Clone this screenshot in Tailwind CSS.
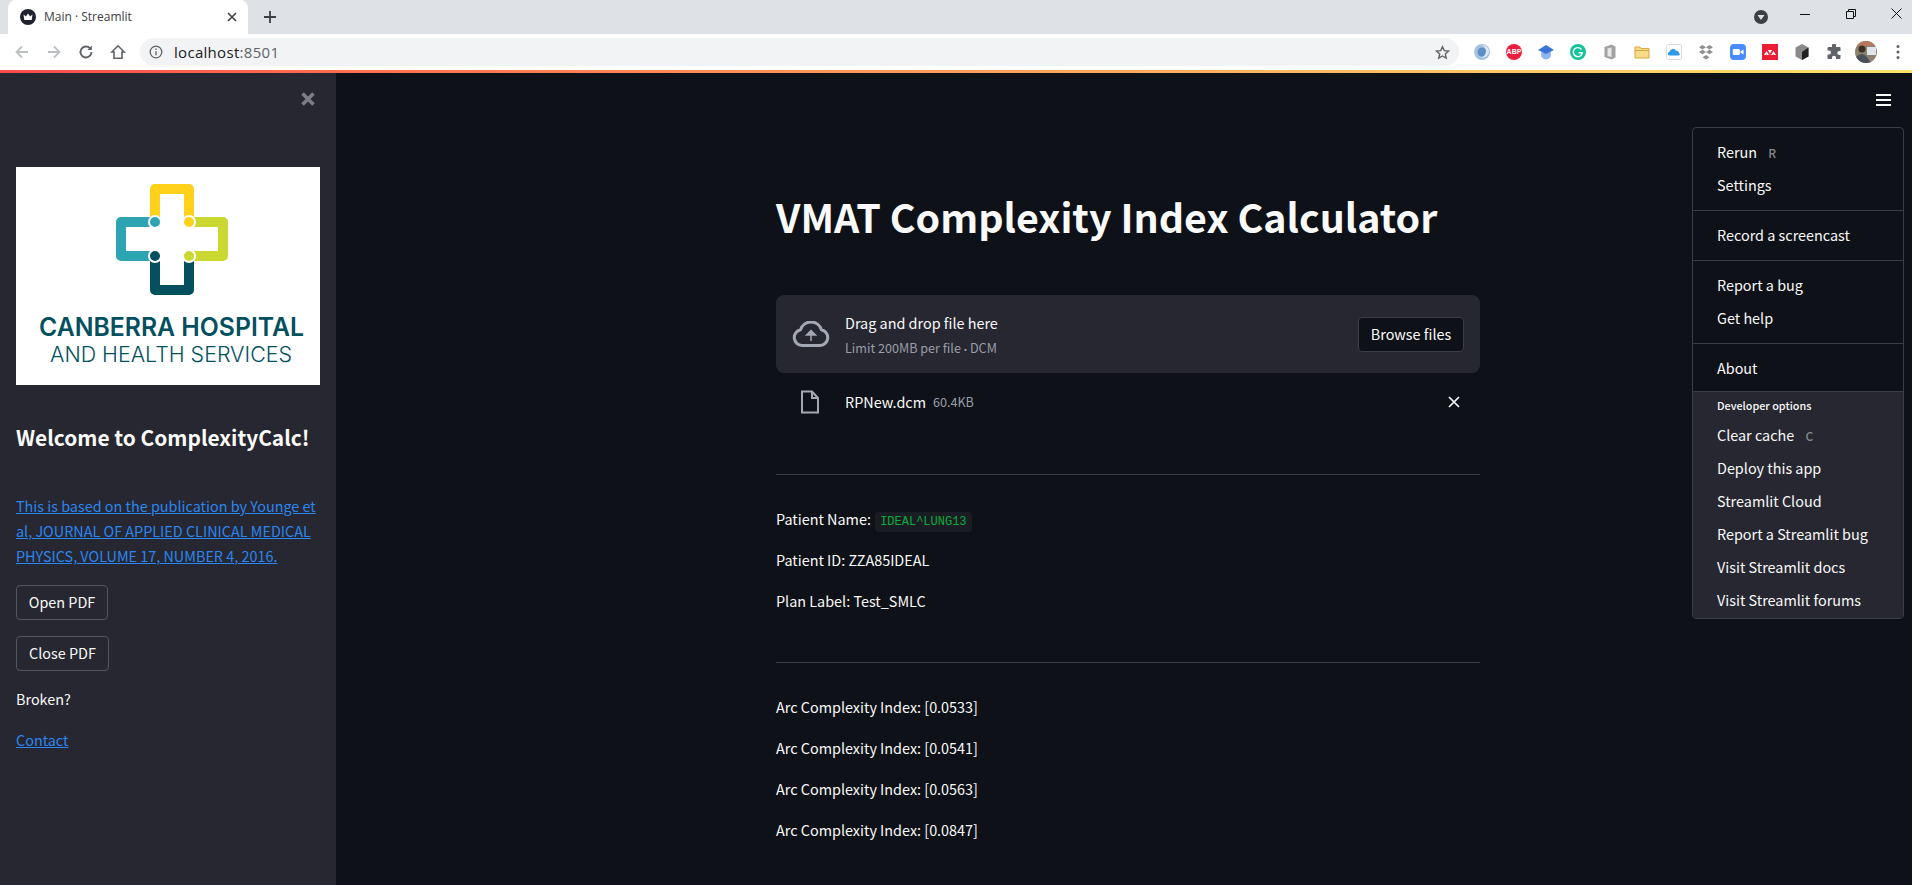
<!DOCTYPE html>
<html lang="en">
<head>
    <meta charset="UTF-8">
    <title>Main - Streamlit</title>
    <script src="https://cdn.jsdelivr.net/npm/@tailwindcss/browser@4"></script>
</head>
<body class="h-[885px] w-[1912px] overflow-hidden bg-[#0e1117] font-['Noto_Sans_CJK_SC','Noto_Sans',sans-serif] text-[#fafafa]">

    <!-- tab strip -->
    <div class="flex h-[34px] items-end bg-[#dee1e6] font-['Open_Sans',sans-serif]">
        <div class="ml-2 flex h-[34px] w-[240px] items-center rounded-t-lg bg-white pl-[12px] pr-[10px] text-[#3c4043]">
            <svg class="h-4 w-4" viewBox="0 0 16 16"><circle cx="8" cy="8" r="8" fill="#1f2330"/><path d="M3.500 5.500l2.400 2 2.100-3 2.100 3 2.400-2-.8 5.500H4.300z" fill="#fff"/></svg>
            <span class="ml-[8px] text-[12px]">Main · Streamlit</span>
            <svg class="ml-auto h-3 w-3" viewBox="0 0 12 12"><path d="M2 2l8 8M10 2l-8 8" stroke="#3c4043" stroke-width="1.600"/></svg>
        </div>
        <svg class="mb-[9px] ml-[14px] h-4 w-4" viewBox="0 0 16 16"><path d="M8 2v12M2 8h12" stroke="#3c4043" stroke-width="1.800"/></svg>
        <svg class="mb-[10px] ml-auto h-[14px] w-[14px]" viewBox="0 0 14 14"><circle cx="7" cy="7" r="7" fill="#3c4043"/><path d="M3.500 5h7L7 10z" fill="#dee1e6"/></svg>
        <div class="mb-[19px] ml-[32px] h-[1.500px] w-[10px] bg-[#111]"></div>
        <svg class="mb-[15px] ml-[36px] h-[10px] w-[10px]" viewBox="0 0 10 10" fill="none" stroke="#111" stroke-width="1"><path d="M.5 2.500h7v7h-7zM2.500 2.500v-2h7v7h-2"/></svg>
        <svg class="mb-[15px] ml-[35px] mr-[10px] h-[11px] w-[11px]" viewBox="0 0 11 11"><path d="M.5.500l10 10M10.500.500l-10 10" stroke="#111" stroke-width="1"/></svg>
    </div>

    <!-- toolbar -->
    <div class="flex h-[36px] items-center bg-white pl-[14px]">
        <svg class="h-4 w-4" viewBox="0 0 16 16" fill="none" stroke="#bcbfc3" stroke-width="1.800"><path d="M14 8H2.500M8 2.500L2.500 8 8 13.500"/></svg>
        <svg class="ml-[16px] h-4 w-4" viewBox="0 0 16 16" fill="none" stroke="#bcbfc3" stroke-width="1.800"><path d="M2 8h11.500M8 2.500L13.500 8 8 13.500"/></svg>
        <svg class="ml-[16px] h-4 w-4" viewBox="0 0 16 16" fill="none" stroke="#5f6368" stroke-width="1.900"><path d="M13.500 8a5.500 5.500 0 1 1-1.600-3.900"/><path d="M13.800 1.500v4.400H9.400z" fill="#5f6368" stroke="none"/></svg>
        <svg class="ml-[16px] h-4 w-4" viewBox="0 0 16 16" fill="none" stroke="#5f6368" stroke-width="1.600"><path d="M8 1.800L1.800 8H4v6.200h8V8h2.200z"/></svg>
        <div class="ml-[14px] flex h-[28px] w-[1319px] items-center rounded-full bg-[#f1f3f4] pl-[9px] pr-[9px]">
            <svg class="h-[14px] w-[14px]" viewBox="0 0 14 14" fill="none" stroke="#5f6368" stroke-width="1.300"><circle cx="7" cy="7" r="5.800"/><path d="M7 6.200v4M7 3.500v1.400"/></svg>
            <span class="ml-[11px] font-['Open_Sans',sans-serif] text-[15px] leading-[24px] tracking-[0.3px] text-[#202124]">localhost<span class="text-[#5f6368]">:8501</span></span>
            <svg class="ml-auto h-[15px] w-[15px]" viewBox="0 0 16 16" fill="none" stroke="#5f6368" stroke-width="1.500"><path d="M8 1.800l1.900 4.200 4.500.5-3.400 3 1 4.500L8 11.700 4 14l1-4.500-3.400-3 4.500-.5z"/></svg>
        </div>
        <div class="ml-[15px] flex items-center gap-[16px]">
            <svg class="h-4 w-4" viewBox="0 0 16 16"><circle cx="8" cy="8" r="8" fill="#a8c3e0"/><circle cx="8" cy="8" r="4.500" fill="#5e8fc4"/><path d="M8 1a7 7 0 0 1 4 6c0 3-2 5-4 7 5-1 7-4 7-7s-3-6-7-6z" fill="#dce8f3"/></svg>
            <div class="flex h-4 w-4 items-center justify-center rounded-full bg-[#ec1c3f] font-['Liberation_Sans',sans-serif] text-[7px] font-bold text-white">ABP</div>
            <svg class="h-4 w-4" viewBox="0 0 16 16"><circle cx="8" cy="10.500" r="5" fill="#8eb4f2"/><path d="M0 6l8-5 8 5-8 4z" fill="#3b74d8"/></svg>
            <svg class="h-4 w-4" viewBox="0 0 16 16"><circle cx="8" cy="8" r="8" fill="#15c39a"/><path d="M11.500 5.500a4.500 4.500 0 1 0 .8 3.200H8.500" fill="none" stroke="#fff" stroke-width="1.400"/></svg>
            <svg class="h-4 w-4" viewBox="0 0 16 16"><path d="M2.500 3L9.500.500 13.500 2.500v11l-4 2-7-2.500z" fill="#a2a2a2"/><path d="M5.500 4.500l4-1v9.500l-4-1z" fill="#e8e8e8"/></svg>
            <svg class="h-4 w-4" viewBox="0 0 16 16"><path d="M1 3h5l1 1.500h8V14H1z" fill="#f7dc87" stroke="#dba543" stroke-width="1"/><path d="M1 6.500h14" stroke="#dba543"/></svg>
            <svg class="h-4 w-4" viewBox="0 0 16 16"><rect x=".5" y=".5" width="15" height="15" rx="2" fill="#fff" stroke="#d8dadd"/><path d="M3 11.500a2 2 0 0 1 .5-3.800 3.500 3.500 0 0 1 6.500-1 2.500 2.500 0 0 1 3 2.500 1.200 1.200 0 0 1 0 2.300z" fill="#2f9ae8"/></svg>
            <svg class="h-4 w-4" viewBox="0 0 16 16" fill="#8f8f8f"><path d="M4.500 1L8 3.200 4.500 5.500 1 3.200zM11.500 1L15 3.200l-3.500 2.300L8 3.200zM4.500 5.800L8 8 4.500 10.300 1 8zM11.500 5.800L15 8l-3.500 2.300L8 8zM8 11l3.500 2.200L8 15.500l-3.500-2.300z"/></svg>
            <svg class="h-4 w-4" viewBox="0 0 16 16"><rect width="16" height="16" rx="4" fill="#4a8cff"/><rect x="2.800" y="5" width="7" height="6" rx="1.200" fill="#fff"/><path d="M10.500 7.500l3-2v5l-3-2z" fill="#fff"/></svg>
            <svg class="h-4 w-4" viewBox="0 0 16 16"><rect width="16" height="16" fill="#ec1c34"/><path d="M2 11l2.500-4L7 11l1-1.500L5.800 6h4.400L8 9.500 9 11l2.500-4L14 11h-2l-.5-1-.5 1H8.800L8 10l-.8 1H5l-.5-1-.5 1z" fill="#fff"/></svg>
            <svg class="h-4 w-4" viewBox="0 0 16 16"><path d="M8 0l6.500 3.500v9L8 16l-6.500-3.500v-9z" fill="#8a8a8a"/><path d="M8 8l6.500-4.500v9L8 16z" fill="#202020"/></svg>
            <svg class="h-4 w-4" viewBox="0 0 16 16" fill="#5f6368"><path d="M6 1.500a2 2 0 0 1 4 0V3h3.500a1 1 0 0 1 1 1v3h-1.200a2 2 0 0 0 0 4h1.200v3a1 1 0 0 1-1 1H10v-1.200a2 2 0 0 0-4 0V15H2.500a1 1 0 0 1-1-1v-3.500H3a2 2 0 0 0 0-4H1.500V4a1 1 0 0 1 1-1H6z"/></svg>
            <svg class="ml-[-3px] h-[22px] w-[22px] rounded-full" viewBox="0 0 22 22"><rect width="22" height="22" fill="#8d8270"/><rect y="0" width="22" height="5" fill="#b9775c"/><rect x="12" y="6" width="9" height="8" fill="#dfe5ea"/><circle cx="7" cy="8" r="3.500" fill="#3c3026"/><path d="M1 22v-6q6-6 11 0l4 6z" fill="#49515a"/></svg>
            <svg class="ml-[3px] h-4 w-[4px]" viewBox="0 0 4 16" fill="#5f6368"><circle cx="2" cy="2.500" r="1.500"/><circle cx="2" cy="8" r="1.500"/><circle cx="2" cy="13.500" r="1.500"/></svg>
        </div>
    </div>

    <!-- streamlit header line -->
    <div class="h-[3px] bg-gradient-to-r from-[#ff4b4b] to-[#ffe36b]"></div>

    <div class="relative flex h-[812px]">

        <!-- sidebar -->
        <aside class="flex w-[336px] shrink-0 flex-col bg-[#262730] px-4">
            <div class="flex h-[94px] shrink-0 justify-end pr-[4px] pt-[18px]">
                <svg class="h-[16px] w-[16px]" viewBox="0 0 16 16"><path d="M2.500 2.500l11 11M13.500 2.500l-11 11" stroke="#7d7e85" stroke-width="3.600"/></svg>
            </div>
            <div class="h-[218px] w-[304px] shrink-0 bg-white">
                <svg class="h-[218px] w-[304px]" viewBox="16 167 304 218">
                    <g fill="none" stroke-width="10" stroke-linejoin="round">
                        <path d="M155 222V189H189V222" stroke="#ffd11a"/>
                        <path d="M155 222H121V256H155" stroke="#2da4b2"/>
                        <path d="M189 222H223V256H189" stroke="#ccd832"/>
                        <path d="M155 256V290H189V256" stroke="#04505f"/>
                    </g>
                    <circle cx="155" cy="222" r="6" fill="#2da4b2" stroke="#fff" stroke-width="2"/>
                    <circle cx="189" cy="222" r="6" fill="#ffd11a" stroke="#fff" stroke-width="2"/>
                    <circle cx="155" cy="256" r="6" fill="#04505f" stroke="#fff" stroke-width="2"/>
                    <circle cx="189" cy="256" r="6" fill="#ccd832" stroke="#fff" stroke-width="2"/>
                    <text x="39" y="336" textLength="265" lengthAdjust="spacingAndGlyphs" font-family="Inter, sans-serif" font-size="25" font-weight="600" fill="#04505f">CANBERRA HOSPITAL</text>
                    <text x="50" y="362" textLength="242" lengthAdjust="spacingAndGlyphs" font-family="Inter, sans-serif" font-size="21" font-weight="300" fill="#04505f">AND HEALTH SERVICES</text>
                </svg>
            </div>
            <h2 class="mt-[35px] h-[34px] text-[20.9px] font-semibold leading-[34px]">Welcome to ComplexityCalc!</h2>
            <a class="mt-[39px] block text-[14.4px] leading-[25px] text-[#2b86f0] underline">This is based on the publication by Younge et al, JOURNAL OF APPLIED CLINICAL MEDICAL PHYSICS, VOLUME 17, NUMBER 4, 2016.</a>
            <button class="mt-[17px] h-[35px] w-[92px] rounded-[4px] border border-[#53545c] bg-[#262730] text-[14.4px] leading-none">Open PDF</button>
            <button class="mt-[16px] h-[35px] w-[93px] rounded-[4px] border border-[#53545c] bg-[#262730] text-[14.4px] leading-none">Close PDF</button>
            <p class="mt-[15px] h-[25px] text-[14.4px] leading-[25px]">Broken?</p>
            <a class="mt-[16px] block h-[25px] text-[14.4px] leading-[25px] text-[#2b86f0] underline">Contact</a>
        </aside>

        <!-- main column -->
        <main class="ml-[440px] w-[704px]">
            <h1 class="mt-[113px] h-[60px] text-[39.4px] font-bold leading-[60px]">VMAT Complexity Index Calculator</h1>
            <div class="mt-[49px] flex h-[78px] items-center rounded-lg bg-[#262730] pl-[16px] pr-[16px]">
                <svg class="h-[26px] w-[38px]" viewBox="0 0 38 26" fill="none" stroke="#a3a8b4" stroke-width="3"><path d="M10 24.500a8 8 0 0 1-1.500-15.800 11 11 0 0 1 21 0A8 8 0 0 1 28 24.500z"/><path d="M19 20v-6M14.500 14L19 9.500l4.500 4.500z" fill="#a3a8b4" stroke-width="1.500"/></svg>
                <div class="ml-[15px]">
                    <div class="h-[25px] text-[14.4px] leading-[23px]">Drag and drop file here</div>
                    <div class="mt-[2px] h-[20px] text-[12.6px] leading-[20px] text-[#9a9ea8]">Limit 200MB per file <span class="font-['Noto_Sans',sans-serif] text-[9px]">•</span> DCM</div>
                </div>
                <button class="ml-auto h-[35px] w-[106px] rounded-[4px] border border-[#3b3d45] bg-[#0e1117] text-[14.4px] leading-none">Browse files</button>
            </div>
            <div class="mt-[9px] flex h-[40px] items-center pl-[24px] pr-[19px]">
                <svg class="h-[24px] w-[20px]" viewBox="0 0 20 24" fill="none" stroke="#a3a8b4" stroke-width="2"><path d="M2 1.500h10l6 6.500v14.500H2z"/><path d="M12 1.500V8h6"/></svg>
                <span class="ml-[25px] mb-[2px] text-[14.4px] leading-[23px]">RPNew.dcm</span>
                <span class="ml-[7px] mb-[2px] text-[12.6px] leading-[23px] text-[#9a9ea8]">60.4KB</span>
                <svg class="ml-auto mb-[1px] h-[14px] w-[14px]" viewBox="0 0 14 14"><path d="M2 2l10 10M12 2L2 12" stroke="#fafafa" stroke-width="1.700"/></svg>
            </div>
            <hr class="mt-[52px] border-t border-[#3b3d45]">
            <div class="mt-[31px] flex flex-col gap-[16px] text-[14.4px] leading-[25px]">
                <p class="h-[25px]">Patient Name: <code class="ml-[1px] rounded bg-[#1a1c24] px-[5px] py-[3px] font-['Liberation_Mono',monospace] text-[12px] text-[#09ab3b]">IDEAL^LUNG13</code></p>
                <p class="h-[25px]">Patient ID: ZZA85IDEAL</p>
                <p class="h-[25px]">Plan Label: Test_SMLC</p>
            </div>
            <hr class="mt-[49px] border-t border-[#3b3d45]">
            <div class="mt-[31px] flex flex-col gap-[16px] text-[14.4px] leading-[25px]">
                <p class="h-[25px]">Arc Complexity Index: [0.0533]</p>
                <p class="h-[25px]">Arc Complexity Index: [0.0541]</p>
                <p class="h-[25px]">Arc Complexity Index: [0.0563]</p>
                <p class="h-[25px]">Arc Complexity Index: [0.0847]</p>
            </div>
        </main>

        <!-- hamburger -->
        <svg class="absolute right-[21px] top-[20px] h-[14px] w-[15px]" viewBox="0 0 15 14" fill="#fafafa"><rect y="1" width="15" height="2"/><rect y="6" width="15" height="2"/><rect y="11" width="15" height="2"/></svg>

        <!-- main menu -->
        <div class="absolute left-[1692px] top-[54px] w-[212px] overflow-hidden rounded-[4px] border border-[#3b3d45] bg-[#0e1117] text-[14.4px] leading-[29px]">
            <div class="pb-[7.5px] pl-[24px] pt-[8.5px]">
                <div class="h-[33px]">Rerun <span class="ml-[8px] text-[12px] font-medium text-[#85878d]">R</span></div>
                <div class="h-[33px]">Settings</div>
            </div>
            <div class="border-t border-[#3b3d45] pb-[7.5px] pl-[24px] pt-[8.5px]">
                <div class="h-[33px]">Record a screencast</div>
            </div>
            <div class="border-t border-[#3b3d45] pb-[7.5px] pl-[24px] pt-[8.5px]">
                <div class="h-[33px]">Report a bug</div>
                <div class="h-[33px]">Get help</div>
            </div>
            <div class="border-t border-[#3b3d45] pb-[6.5px] pl-[24px] pt-[7.5px] leading-[31px]">
                <div class="h-[33px]">About</div>
            </div>
            <div class="border-t border-[#3b3d45] bg-[#262730] pb-[1px] pl-[24px] leading-[31px]">
                <div class="h-[26.5px] text-[10.8px] font-medium leading-[26px]">Developer options</div>
                <div class="h-[33px]">Clear cache <span class="ml-[8px] text-[12px] font-medium text-[#85878d]">C</span></div>
                <div class="h-[33px]">Deploy this app</div>
                <div class="h-[33px]">Streamlit Cloud</div>
                <div class="h-[33px]">Report a Streamlit bug</div>
                <div class="h-[33px]">Visit Streamlit docs</div>
                <div class="h-[33px]">Visit Streamlit forums</div>
            </div>
        </div>
    </div>
</body>
</html>
